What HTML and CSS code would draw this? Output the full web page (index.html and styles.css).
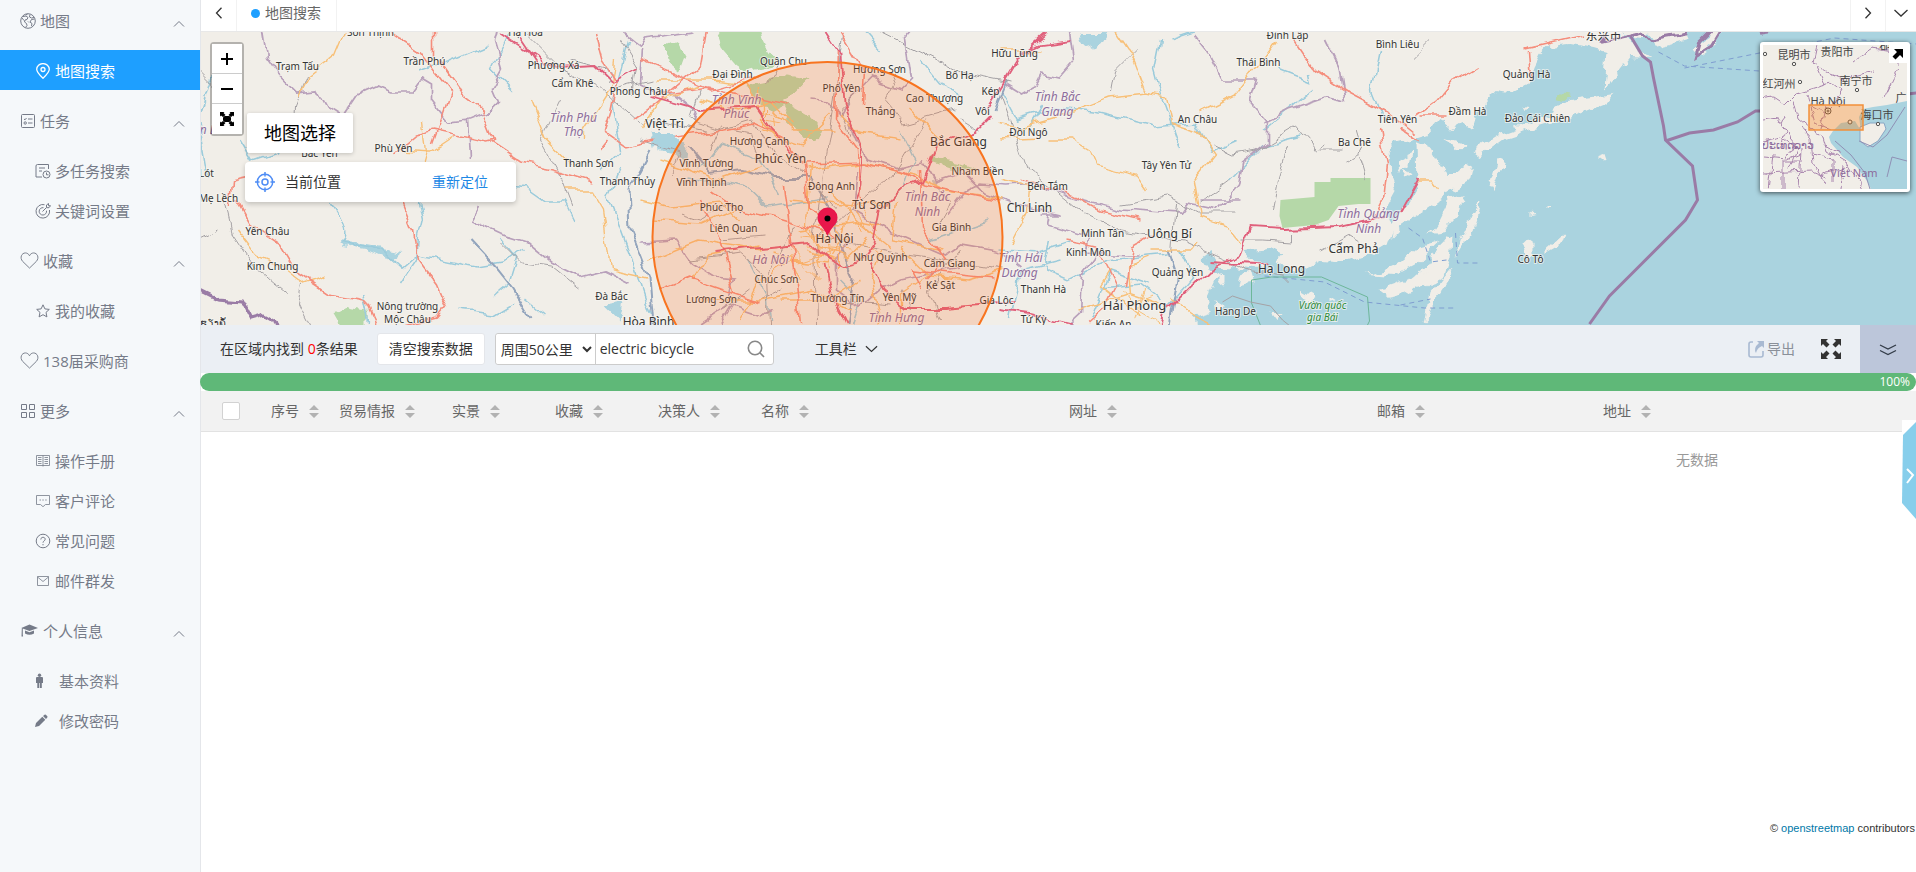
FILE: index.html
```html
<!DOCTYPE html>
<html lang="zh-CN">
<head>
<meta charset="utf-8">
<title>地图搜索</title>
<link rel="stylesheet" href="styles.css">
</head>
<body>
<svg class="defs" aria-hidden="true">
  <symbol id="up" viewBox="0 0 12 8"><path d="M1 6.5 6 1.5l5 5" fill="none" stroke="currentColor"/></symbol>
  <symbol id="heart" viewBox="0 0 20 18"><path d="M10 17 2.800 10C-.8 6 1.800 1 5.600 1 7.600 1 9.200 2.200 10 4 10.800 2.200 12.400 1 14.400 1c3.800 0 6.400 5 2.800 9z" fill="none" stroke="currentColor"/></symbol>
  <symbol id="sort" viewBox="0 0 10 13"><path d="M5 0 10 5H0zM5 13 0 8h10z" fill="#b2b2b2"/></symbol>
</svg>
<div class="app">
<nav class="side">
  <a class="group first" href="#"><svg class="ic" viewBox="0 0 16 16"><g fill="none" stroke="currentColor"><circle cx="8" cy="8" r="7.3"/><path d="M3 3.500 6 3l2 1.500-1 2-2 .5-.5 2 2 1.500.5 2-1.500 2M2 5l2 2.500M10 1.500 9.500 4l2 1 2.500-.5M14.500 6l-3 .5L10 9l2 1.500-.5 2.500M8 8.500l1 1M5.500 2l2-.8"/></g></svg><span>地图</span><svg class="fold"><use href="#up"/></svg></a>
  <a class="item on" href="#"><svg class="ic" viewBox="0 0 16 16"><g fill="none" stroke="currentColor" stroke-width="1.300"><path d="M8 15.300C4 11.500 1.700 9.300 1.700 6.300a6.300 5.700 0 0 1 12.600 0C14.300 9.300 12 11.500 8 15.300z"/><circle cx="8" cy="6.500" r="2"/></g></svg><span>地图搜索</span></a>
  <a class="group" href="#"><svg class="ic" viewBox="0 0 16 16"><g fill="none" stroke="currentColor"><rect x="1.500" y="1.500" width="13" height="13" rx="1"/><path d="M4 6l1 .8L6.500 5M8 6h4.500M8 10h4.500"/><circle cx="5.200" cy="10" r="1.200"/></g></svg><span>任务</span><svg class="fold"><use href="#up"/></svg></a>
  <a class="item" href="#"><svg class="ic" viewBox="0 0 16 16"><g fill="none" stroke="currentColor"><path d="M13.500 6V1.500H2.500Q1 1.500 1 3v11h6M4 5h6M4 8h3"/><circle cx="11.500" cy="11.500" r="3.500"/><path d="M11.500 9.500v2.300h2"/></g></svg><span>多任务搜索</span></a>
  <a class="item" href="#"><svg class="ic" viewBox="0 0 16 16"><g fill="none" stroke="currentColor"><path d="M9.500 1.700A6.800 6.800 0 1 0 14.500 7M8.500 4.700A3.700 3.700 0 1 0 11.500 7.700M7.500 8.500l4-4V2l2-1.500V2.700h2l-1.500 2h-2.500"/></g></svg><span>关键词设置</span></a>
  <a class="group" href="#"><svg class="ic big"><use href="#heart"/></svg><span>收藏</span><svg class="fold"><use href="#up"/></svg></a>
  <a class="item" href="#"><svg class="ic" viewBox="0 0 16 16"><path d="M8 1.800l1.900 4.100 4.400.5-3.300 3 .9 4.500L8 11.700l-3.900 2.200.9-4.500-3.300-3 4.400-.5z" fill="none" stroke="currentColor"/></svg><span>我的收藏</span></a>
  <a class="group leaf" href="#"><svg class="ic big"><use href="#heart"/></svg><span>138届采购商</span></a>
  <a class="group" href="#"><svg class="ic" viewBox="0 0 16 16"><path d="M1.500 1.500h5v5h-5zM9.500 1.500h5v5h-5zM1.500 9.500h5v5h-5zM9.500 9.500h5v5h-5z" fill="none" stroke="currentColor"/></svg><span>更多</span><svg class="fold"><use href="#up"/></svg></a>
  <a class="item" href="#"><svg class="ic" viewBox="0 0 16 16"><path d="M1.500 2.500h13v10h-13zM8 2.500v11M3 4.500h3.500M3 6.500h3.500M3 8.500h3.500M3 10.500h3.500M9.500 4.500H13M9.500 6.500H13M9.500 8.500H13M9.500 10.500H13" fill="none" stroke="currentColor" stroke-width=".8"/></svg><span>操作手册</span></a>
  <a class="item" href="#"><svg class="ic" viewBox="0 0 16 16"><path d="M1.500 2.500h13v9h-4L8 13.700l-2.500-2.200h-4zM4.500 7H6M7.300 7h1.500M10.200 7h1.500" fill="none" stroke="currentColor" stroke-width=".8"/></svg><span>客户评论</span></a>
  <a class="item" href="#"><svg class="ic" viewBox="0 0 16 16"><g fill="none" stroke="currentColor"><circle cx="8" cy="8" r="6.800"/><path d="M5.800 6.500C5.800 3.500 10.200 3.700 10.200 6.200 10.200 8 8 7.800 8 9.700M8 11v1.300"/></g></svg><span>常见问题</span></a>
  <a class="item" href="#"><svg class="ic" viewBox="0 0 16 16"><path d="M2.500 3.500h11v9h-11zM2.500 4 8 8.500 13.500 4" fill="none" stroke="currentColor" stroke-width=".8"/></svg><span>邮件群发</span></a>
  <a class="group" href="#"><svg class="ic wide" viewBox="0 0 18 16"><path d="M9 1.500 17.500 5 9 8 .8 5zM4.500 7.500 9 9.200l4.500-1.700v3q-4.500 2.500-9 0zM1.300 5.500h1v6l.3 2H1z" fill="currentColor"/></svg><span>个人信息</span><svg class="fold"><use href="#up"/></svg></a>
  <a class="item person" href="#"><svg class="ic" viewBox="0 0 16 16"><path d="M1 5q0-1 1-1h5q1 0 1 1v5H6.800v5H4.900v-5h-.7v5H2.300v-5H1z" fill="currentColor"/><circle cx="4.500" cy="2.200" r="1.700" fill="currentColor"/></svg><span>基本资料</span></a>
  <a class="item person" href="#"><svg class="ic" viewBox="0 0 16 16"><path d="M0 14 1 10 7.300 3.700l3 3L4 13zM8 3l1.500-1.300q.7-.5 1.300 0l1.500 1.500q.5.600 0 1.200L11 6z" fill="currentColor"/></svg><span>修改密码</span></a>
</nav>
<main class="main">
  <header class="tabs">
    <button class="arrow" aria-label="上一个"><svg viewBox="0 0 12 12"><path d="M8.500.8 3.500 6l5 5.200"/></svg></button>
    <a class="tab" href="#"><i></i>地图搜索</a>
    <button class="arrow next" aria-label="下一个"><svg viewBox="0 0 12 12"><path d="M3.500.8 8.500 6l-5 5.200"/></svg></button>
    <button class="arrow more" aria-label="更多标签"><svg viewBox="0 0 14 12"><path d="M.5 3 7 9l6.500-6"/></svg></button>
  </header>
  <section class="map" aria-label="地图">
    <svg class="canvas" viewBox="200 32 1716 293" preserveAspectRatio="xMidYMid slice">
      <defs>
        <filter id="rough" filterUnits="userSpaceOnUse" x="190" y="20" width="1740" height="320"><feTurbulence type="fractalNoise" baseFrequency=".07" numOctaves="3" seed="4"/><feDisplacementMap in="SourceGraphic" scale="12" xChannelSelector="R" yChannelSelector="G"/></filter>
        <filter id="winding" filterUnits="userSpaceOnUse" x="190" y="20" width="1740" height="320"><feTurbulence type="fractalNoise" baseFrequency=".05" numOctaves="2" seed="9"/><feDisplacementMap in="SourceGraphic" scale="12" xChannelSelector="R" yChannelSelector="G"/></filter>
      </defs>
      <path class="land" d="M200 32h1716v293H200z"/>
      <g filter="url(#rough)">
        <path class="water" d="M1620 20 1632 46 1652 57 1630 56 1614 76 1603 88 1606 52 1592 48 1570 44 1548 46 1540 54 1532 70 1528 84 1516 92 1498 89 1488 100 1476 116 1472 130 1462 122 1452 128 1440 119 1428 133 1412 138 1394 142 1386 152 1390 176 1396 192 1384 214 1392 226 1386 244 1366 256 1342 264 1320 262 1304 270 1282 266 1268 262 1248 270 1230 267 1216 278 1208 296 1210 312 1190 318 1220 345 1940 345 1940 20z"/>
        <path class="water" d="M1244 252l26-3 12 6-8 9-22-2zM1202 258l8-6 8 14 16 4-20 6zM1078 32l30 0-6 10-8 10-12-8zM652 134l22 0 14 14-2 20-10-14-20-4zM340 240l20 4 44 8-14 8-24-10-24-4zM604 306l20-4-4 20z"/>
        <g class="isle">
          <path d="M1606 20l72 0 8 20-30 8-6-10-16-2zM1712 20h16l-12 22-16 12-7-4 14-10zM1758 20h30l-12 12zM1417 143l14 6 14 24 10 0 18-8-4 16-20 12-26 18-22 14-11 12 2-16 14-16 12-20zM1404 155l8-4-2 12-14 10zM1444 138l20 6-8 8zM1472 150l26-16 40-14 32-20 44-6-12 10-34 14-34 10-30 10-24 18zM1496 158l8 2-8 20-4 12-4-6zM1450 198l12-4-4 22-14 16-14 2 8-12zM1478 202l3 0-8 26-18 30 6-20zM1444 240l8-6-2 24-6 18-18 8-24 2 20-16zM1450 270l4 4-18 26-8 18-4 4 6-28zM1520 243l6-6 8 6 0 12-8 8zM1546 250l18-16-4 12-14 8zM1598 155l8-3 2 6-10 1zM1522 104l6 1-4 3zM1529 212l4 4-4 1zM1564 188l4 4zM1545 206l5 0-5 3zM1620 173l3 1z"/>
          <path d="M1240 276l10-4 2 12-14 2zM1218 276l8 0 0 8-8 2zM1366 274l26-6 24-20 22-6-20 20-26 14zM1380 290l40-14 18-6-24 18-24 10zM1436 256l16-16-4 22-18 26-4-4zM1330 296l6 4-6 2zM1300 290l14 8-6 4zM1270 312l12 0-6 8zM1318 276l6 2zM1214 300l8 6-6 8zM1404 168l6 8-8 6z"/>
        </g>
        <path class="forest" d="M714 28h46l4 16 10 14-4 8-26 6-10-8-12-14zM664 46l14-6 8 16-6 16-10-8z"/>
        <path class="forest" d="M746 84l40-8 22 4-14 14-12 6 24 14 14 16-4 10-12 0-14-18-8-16-8 4-16-4-6-14z"/>
        <path class="forest" d="M334 314l12-6 20 4 0 16-24 0zM1558 94l10 2-6 6-8-2z"/>
        <path class="forest" d="M930 156l30 6 18 6-20 4-28-10z"/>
      </g>
      <path class="forest" d="M1280 200l34-3v-15h16v-4h40v26l-12 0-20 2-10 14-14 5-32 3-3-12z"/>
      <g class="lines" filter="url(#winding)">
        <g class="stream">
          <path d="M332 203q20 30 10 38l40 10 20 18 16-14 60 12 24-4 20-14"/><path d="M418 200l4 20-4 16-2 24-16 24M470 170l18 10 36 8 20 14 20 0 10 20M500 238l16 20-8 26-14 12M524 300l20 16M214 70l-16 50 10 60M240 140l12 20 24-8 8-20 20-10M458 310l36 4 20-12M362 292l6 30M484 46l-38 16-30 10"/>
          <path d="M510 32l-18 38 20 20M600 170l20-20-8-50 14-60M620 170l-12 26 22 60 20 60M1000 90l16 30 40-12 38 4 60 14 40-4 16 30 26-12M1044 105l-12 20M1160 40l-6 30 8 30 18 50M1230 180l32-34 40-10M1280 70l30 12-2-10M1380 50l-8 40 12 30M1265 128l50-40M880 50l-16-18M920 60l20 24 20 10M900 130l14 30-10 30M1200 30l-30 10M1050 240l-6 30 24 10 40-20 60-6M1000 250l40 2 30-10M1010 320l10-50 40-10M1090 320l20-50 40 14M1160 300l-20-16-40 4M1178 250l14 30-26 30M700 170l20-26 38 14 20 34M688 178l60 10 20 20 60-10M770 320l-2-20-20-40M840 280l20 20-8 25M930 240l60-20"/>
        </g>
        <path class="river" d="M690 148l22 26 30-4 30 8 38 0 26 40 4 30 14 30-8 48M470 240l26 28 16 20 18 30M650 150l-22 40 2 40 18 46 4 50M1168 250l10 30-8 45M1006 80l-12 30"/>
        <g class="border">
          <path d="M262 32l4 26 10 14 20 20 20-2 10 18 16 10 16-24 18-8 14 6 22 0 10-14 10 6 0 18 16 20 20-2 20-8 10-10-6-14 10-18-8-28 4-18M466 120l2 40M478 206l-8 14 30 14 26 8 24 20 28 14 24-6 28 14"/>
          <path d="M620 32l20 16 6-10 46-6M642 50l-2 34 16 8 20 4 20 16-4 16M810 100l20 2 10 14 8-14 24-24 28 10 10-10-6-40 14-16M848 120l8 20 12 18 30 10 24-6 12 20 30-10 20 20 38 14 40 10-20 0M856 170l-4 40 34 20 60 26 14-10 46 8 16 12M850 240l-14 20 0 30 24 18 20-18 20-10 60-12M720 325l12-20 30 10 10-8M640 242l36-2 16 22 22 14 20 2-8 30-30 20"/>
          <path d="M1005 84l16 10 14-8 6-12 18 4 14-16-4-30M1194 36l16 20 12 24 28 0 6 0-6 22 18 20 0 20-26 20-4 24-20 24-30-6-8 10-60-4-46-12-40-14-26 2-28-2-16 8-18 24M1264 122l24-12 36-12 20 4-6-36-14-28M1240 200l-40 0M1050 215l-2 10 40 12-2 14 40 4 12 0M1100 250l-18 24-2 40-16 15"/>
        </g>
        <path class="nation" d="M194 288l24 12 24 2 8 16 14-4 10 6 8 24 30 16-6 0M1603 32l-2 10 26-6 16-4 8 8 34-6-6-12M1722 26l-12 20-16 10 4-14 14-14M1756 20l4 14 28-4"/>
        <g class="rail">
          <path d="M198 70l20 20M198 238l20-10M224 202l8 32 20 30 36 30M306 76l-12 30-2 34M302 284l-4 20 14 28M1000 95l16 44 10 30 26 20 30 24 40 18 60 10 30 14 40 18 30 4 6 6M1176 205l-4 48M524 32l38 38 40 20 40 36M650 120l60 12 40-12 20 30 30 20 36 40M842 34l-8 70-20 130 2 90M816 240l80-70 30-50M824 238l60 12 118 20M880 32l80 40 50 10M768 325l-2-50 30-50"/>
          <path d="M580 290l-30-24-30-4-20-20M620 40l16 26-4 30M650 80l-40 10M570 60l40 10-4 12M1110 92l4-22 20-20M1212 145l20 10 24-4 40-24 20 24 10-6M1272 210l6-32 10-32M1120 205l46-8 30 16 40 0M1346 160l16-10-6-20M1366 180l-8-28M1340 150l-20 0M1240 240l22 0 30 2 0-16M1320 252l28-16 16 10M1410 60l20-20M1230 180l-30 22M560 100l-20 40 22 40 10 26"/>
          <path d="M640 140l40 14-10 20M700 90l-10 30 30 10M710 150l10-24 30 6 10 30M730 200l-30 20-20-6M720 240l44-4M690 260l50-6 26 22M780 60l-14 26M860 90l-20 20 10 24M900 70l-16 30 20 24 50-14M930 180l20 20-10 24M880 210l20-20M960 250l-30 40 10 30M840 300l50 4M900 290l10 20M750 290l-26 20M780 290l-20 10M980 130l-20-12"/>
        </g>
        <g class="minor">
          <path d="M344 32l-10 24-26 20-10 20M416 188l10-36-4-30M236 230l20 26 24 10 24 18 22-8M400 150l30 2 24-16M530 100l16 40 24 24M614 60l-4 30-26 40 0 10M566 190l24 0 12 20 8 60 36 8M640 130l20-30 40-14M654 80l60 0 30 4 10 14M640 200l30 8 50-6 20 20M650 220l50 4 40-18M648 260l50-20 60 10M660 160l60 20 40-14M700 100l40 10 30-10 22 24M760 90l0 30 18 20M770 110l24 20 40 0"/>
          <path d="M806 170l60-8 50 14 30 14 56 8M810 165l-4 60 10 20 30 12 20-20M790 200l60 6 40-2M800 230l60-8 20 4M830 190l20 26 40 32M836 260l-30-10M850 200l-10 40-10 16M880 250l-10 30 10 45M900 246l30 30 40 4 34-10M740 320l20-40 30-20 40 4M700 300l60 0 50-10 40 20M900 325l0-30 30-20M860 280l-30 20-50 0M896 200l-4 40 50 10M910 110l30 30M900 140l-40-6-20-20M760 130l40 14 30-30M692 280l16-24 50-10M800 280l-10-24-20-4"/>
          <path d="M1114 32l20 30 12 32 20 4 6 26 26 8 16 24-20 24 6 36 24 8 16 20M1148 94l-40 4-30 12-60 18-20-4M1050 140l20 0 20 12 6 14 40 10 10 14M1200 112l36-18 30-38 10-14M1002 180l26 6-2 26-16 32M1150 250l40 0 6-8M1130 295l-2-30 22-8M1140 315l-40-30 10-16M1418 180l12 0 8 10M1170 300l20 14 20 10M1000 50l40 0M1000 140l40-2M1078 310l50-16 30 10"/>
        </g>
        <g class="city">
          <path d="M800 236l50 4M806 246l44 4M812 230l8 40M824 230l6 40M838 228l0 40M846 208l16 24M852 206l16 26M858 202l18 30M790 250l30 30M798 262l40-12M862 244l30 20M758 112l24 6M760 120l20 4M764 108l0 20M772 108l2 20M1124 290l14 20 20 12M1130 304l20-8M1134 320l10-30"/>
        </g>
        <g class="road">
          <path d="M390 32l30 20 30 40-10 30-8 22M434 32l0 24M438 60l26 36 18 14 12 30-8 2-54-12-16 4-24 20M490 142l30 20 30 6 40 12M560 170l-2 2M230 208l2-28 18-4 24 4M236 200l14 24 30 20 18 30 30 20 36 6 14 30 30-4M402 200l12 30 4 30 18 24 10 24-8 10-40 10M594 32l8 30 14 20-6 30-6 20 20 14 30-6M632 120l20-14 48-40 6-34M600 150l8-10"/>
          <path d="M640 60l70 30 50-14M652 96l56-8 80 16M674 136l50-6 30-6 30 14 20 28 4 42 20 12 6 26M804 164l60-2 40 10 20 12 76 16M712 190l30 20 30 6 54 16M784 184l12 100 4 40M700 200l20 40 14 52M660 290l30-12 40 14 30 10M838 50l-2 70 22 30 2 50M840 32l24 40-2 30M1066 240l30 6 10 20 10 20-10 20-20 18M922 290l-10-20 80 8M920 170l2 60 24 30-20 20M1020 180l50 14 30 16 40 10M1150 235l-18 10-6 40M1400 130l18 12M1294 40l20 30 34 22 38 20 30 24M1380 130l6 34-4 36-10 20M1416 115l20-14 20-24 20-12M1584 34l-60 14M1528 50l2 30M1420 116l28 0"/>
        </g>
        <g class="trunk">
          <path d="M500 32l36 24 20 12 40-2 16 16 24-14M520 38l20 30M650 96l50 14 54-4 14 20 24 26M826 32l14 22 4 50 18 46-2 36-8 20M714 253l34-4 60-6 20 16 14 6 16-4 14-20 6-30 20-20 24-10 14-36 40-14 14-14M825 265l6 30 14 30M870 262l14 30 20 16 40 0 70-6M1000 310l30 4 40 10M986 110l30-50 30-26M1168 310l40-40 30-14 12-30 30 2 60-2 44-10M1164 312l-4 14M1070 40l-30 4-20 10M1210 262l60 4M1400 210l18-32"/>
        </g>
      </g>
      <path class="nation" d="M1630 36l12 20 8 6 3 16 10 48 2 14 27 26 5 34-12 20-50 50-26 26-20 28M1665 141l24-8 24-3 24-8 18-11h12l149-18"/>
      <path class="ferry" d="M1658 52l26 14 30 2 60 4M1684 68l150-30 82 6M1408 228l14 10 8 24 16-2M1264 276l60 6 40 20 60 6 30 0M1455 233l2 30 22 0M1400 305l30-6"/>
      <path class="park" d="M1251 280l20-3 50 0 46 20 2 24-6 12-100 0-12-30z"/>
      <path class="rail" d="M1222 302l10-6 18 6 20 4 12 14 10 8"/>
      <g class="names">
        <text x="297" y="70">Trạm Tấu</text><text x="424" y="65">Trần Phú</text><text x="370" y="36">Sơn Thịnh</text><text x="525" y="36">Hạ Hoà</text><text x="553" y="69">Phượng Xá</text><text x="572" y="87">Cẩm Khê</text><text x="638" y="95">Phong Châu</text><text x="319" y="157">Bắc Yên</text><text x="393" y="152">Phù Yên</text><text x="206" y="177">Lót</text><text x="218" y="202">Mẹ Lềch</text><text x="267" y="235">Yên Châu</text><text x="272" y="270">Kim Chung</text><text x="407" y="310">Nông trường</text><text x="407" y="323">Mộc Châu</text><text x="588" y="167">Thanh Sơn</text><text x="627" y="185">Thanh Thủy</text><text x="611" y="300">Đà Bắc</text><text x="648" y="326" class="m">Hòa Bình</text><text x="212" y="326">ຊຽງຄໍ້</text>
        <text x="783" y="65">Quân Chu</text><text x="732" y="78">Đại Đình</text><text x="879" y="73">Hương Sơn</text><text x="841" y="92">Phổ Yên</text><text x="934" y="102">Cao Thượng</text><text x="880" y="115">Thắng</text><text x="759" y="145">Hương Canh</text><text x="706" y="167">Vĩnh Tường</text><text x="701" y="186">Vĩnh Thịnh</text><text x="831" y="190">Đông Anh</text><text x="721" y="211">Phúc Thọ</text><text x="733" y="232">Liên Quan</text><text x="951" y="231">Gia Bình</text><text x="880" y="261">Như Quỳnh</text><text x="949" y="267">Cẩm Giang</text><text x="776" y="283">Chúc Sơn</text><text x="711" y="303">Lương Sơn</text><text x="837" y="302">Thường Tín</text><text x="899" y="301">Yên Mỹ</text><text x="940" y="289">Kẻ Sặt</text><text x="996" y="304">Gia Lộc</text><text x="977" y="175">Nham Biền</text><text x="959" y="79">Bố Hạ</text><text x="990" y="95">Kép</text><text x="982" y="115">Vôi</text><text x="1014" y="57">Hữu Lũng</text><text x="1028" y="136">Đồi Ngô</text><text x="1047" y="190">Bến Tắm</text><text x="1197" y="123">An Châu</text><text x="1166" y="169">Tây Yên Tử</text><text x="1258" y="66">Thái Bình</text><text x="1287" y="39">Đình Lập</text><text x="1397" y="48">Bình Liêu</text><text x="1397" y="123">Tiên Yên</text><text x="1354" y="146">Ba Chẽ</text><text x="1102" y="237">Minh Tân</text><text x="1088" y="256">Kinh Môn</text><text x="1177" y="276">Quảng Yên</text><text x="1043" y="293">Thanh Hà</text><text x="1033" y="323">Tứ Kỳ</text><text x="1113" y="328">Kiến An</text><text x="1235" y="315">Hang De</text><text x="1526" y="78">Quảng Hà</text><text x="1467" y="115">Đầm Hà</text><text x="1537" y="122">Đảo Cái Chiên</text><text x="1530" y="263">Cô Tô</text><text x="1603" y="40" class="m">东兴市</text>
        <g class="m"><text x="664" y="128">Việt Trì</text><text x="780" y="163">Phúc Yên</text><text x="958" y="146">Bắc Giang</text><text x="871" y="209">Từ Sơn</text><text x="834" y="243">Hà Nội</text><text x="1029" y="212">Chí Linh</text><text x="1169" y="238">Uông Bí</text><text x="1281" y="273">Hạ Long</text><text x="1353" y="253">Cẩm Phả</text><text x="1134" y="310" class="l">Hải Phòng</text></g>
        <g class="prov"><text x="573" y="122">Tỉnh Phú</text><text x="573" y="136">Thọ</text><text x="736" y="104">Tỉnh Vĩnh</text><text x="736" y="118">Phúc</text><text x="927" y="201">Tỉnh Bắc</text><text x="927" y="216">Ninh</text><text x="770" y="264">Hà Nội</text><text x="896" y="322">Tỉnh Hưng</text><text x="1057" y="101">Tỉnh Bắc</text><text x="1057" y="116">Giang</text><text x="1020" y="262">Tỉnh Hải</text><text x="1019" y="277">Dương</text><text x="1368" y="218">Tỉnh Quảng</text><text x="1368" y="233">Ninh</text><text x="204" y="134">Sơn La</text></g>
        <g class="reserve"><text x="1322" y="309">Vườn quốc</text><text x="1322" y="321">gia Bái</text></g>
      </g>
      <circle class="range" cx="827" cy="237" r="175"/>
      <path class="pin" d="M827 236C823 226 817 225 817 217.500a10 10 0 0 1 20 0C837 225 831 226 827 236z"/><circle cx="827" cy="218.500" r="3"/>
    </svg>
    <div class="zoom"><button aria-label="放大"><svg viewBox="0 0 14 14"><path d="M7 1v12M1 7h12" stroke="#000" stroke-width="2"/></svg></button><button aria-label="缩小"><svg viewBox="0 0 14 14"><path d="M1 7h12" stroke="#000" stroke-width="2"/></svg></button><button aria-label="全屏"><svg viewBox="0 0 14 14"><rect x="3" y="4" width="8" height="6" rx="2"/><path d="M0 0h4.500L3.500 1 5.500 3 3 5 1 3.500 0 4.500zM14 0v4.500l-1-1L11 5 8.500 3l2-2-1-1zM0 14V9.500l1 1L3 9l2.500 2-2 2 1 1zM14 14H9.500l1-1-2-2L11 9l2 1.500 1-1z"/></svg></button></div>
    <h1 class="pick">地图选择</h1>
    <div class="locate"><svg viewBox="0 0 20 20"><g fill="none" stroke="#4f8df5" stroke-width="1.500"><circle cx="10" cy="10" r="7.700"/><circle cx="10" cy="10" r="3"/><path d="M10 0v4.500M10 15.500V20M0 10h4.500M15.500 10H20"/></g></svg><span>当前位置</span><a href="#">重新定位</a></div>
    <div class="mini">
      <svg viewBox="0 0 144 144">
        <defs><filter id="mr" x="0" y="0" width="1" height="1"><feTurbulence type="fractalNoise" baseFrequency=".1" numOctaves="2" seed="3"/><feDisplacementMap in="SourceGraphic" scale="8" xChannelSelector="R" yChannelSelector="G"/></filter></defs>
        <path d="M0 0h144v144H0z" fill="#f1eee8"/>
        <path d="M144 56l-20 4-14 2-10 2-4 8 2 14-6-10-14 2-8 8-4 6 2 6 12 14 14 10 10 14 4 8h36z" fill="#aad3df"/>
        <path d="M97 82l10-4 14 0 2 6-8 12-10 6-8-6z" fill="#f1eee8" stroke="#8aa7c4"/>
        <g filter="url(#mr)" fill="none" stroke="#bfa3c4" stroke-width="1"><path stroke="#a884ad" d="M-4 54l14-2 12 8 12-12 20-6 14-4 10 8-8 14M30 56l4 16 14 12 12 8 4 14 20 12 16 26 4 16M54 0l-4 18 14 10 16 6 30-8M54 22l8 18M135 0l0 24-14 30M90 18l20-14 26 4M0 76l14-2 8 12-4 18M22 70l-4 10 14 18-10 16M44 50l8 28 14 6M48 60l14 8 8-8M38 82l10 12 2 24 12 22M0 96l18-4 16 12-8 20M0 112l24 2 14-6M6 144l4-34M20 144l0-28 20 0M36 144l2-40M0 128l48-2 14 6M50 108l20 6 0 24M56 130l30-8M78 144l2-24M60 100l18 10M64 60l-6 24"/></g>
        <path d="M142 62 124 90 110 102 96 96M72 96l16 14 14 18 5 16M124 132l5-20 15 4" fill="none" stroke="#8f90b5"/>
        <g fill="#f4f1ec" stroke="#555"><circle cx="2" cy="9" r="1.700"/><circle cx="31" cy="19" r="1.700"/><circle cx="37" cy="37" r="1.700"/><circle cx="94" cy="45" r="1.700"/><circle cx="65" cy="66" r="3"/><circle cx="65" cy="66" r="1"/><circle cx="115" cy="79" r="1.700"/><circle cx="87" cy="77" r="2"/></g>
        <g class="mtext"><text x="31" y="14">昆明市</text><text x="74" y="11">贵阳市</text><text x="16" y="43">红河州</text><text x="93" y="40">南宁市</text><text x="65" y="60">Hà Nội</text><text x="114" y="74">海口市</text><text x="138" y="57">广</text><text x="122" y="4">郡</text><text class="land-name" x="25" y="104">ປະເທດລາວ</text><text class="land-name" x="91" y="132">Việt Nam</text></g>
        <path d="M46 60h54v25H46z" fill="#ff7800" fill-opacity=".3" stroke="#f2903a" stroke-width="1.500"/>
      </svg>
      <button aria-label="收起小地图"><svg viewBox="0 0 12 12"><path d="M2 1h9v9L8 7l-4.500 4.500-3-3L5 4z"/></svg></button>
    </div>
  </section>
  <section class="tools">
    <p>在区域内找到 <b>0</b>条结果</p>
    <button class="clear">清空搜索数据</button>
    <form class="search"><select aria-label="范围"><option>周围50公里</option></select><input type="text" value="electric bicycle" aria-label="关键词"><button type="button" aria-label="搜索"><svg viewBox="0 0 18 18"><g fill="none" stroke="#888" stroke-width="1.600"><circle cx="8" cy="8" r="6.700"/><path d="M12.800 12.800 17 17"/></g></svg></button></form>
    <button class="bar">工具栏<svg viewBox="0 0 14 8"><path d="M1 1l6 5.500L13 1" fill="none" stroke="currentColor" stroke-width="1.300"/></svg></button>
    <button class="export"><svg viewBox="0 0 18 18"><path d="M6 2H4Q2 2 2 4v11q0 2 2 2h10q2 0 2-2v-4" fill="none" stroke="#a9bad2" stroke-width="1.600"/><path d="M10 1h7v7l-2-2Q10 8 9 13 6 8 12 3z" fill="#a9bad2"/></svg>导出</button>
    <button class="full" aria-label="全屏"><svg viewBox="0 0 20 20"><path d="M0 0h7L5 2l3.500 3.500-3 3L2 5 0 7zM20 0v7l-2-2-3.500 3.500-3-3L15 2l-2-2zM0 20v-7l2 2 3.500-3.500 3 3L5 18l2 2zM20 20h-7l2-2-3.500-3.500 3-3L18 15l2-2z" fill="#333"/></svg></button>
    <button class="collapse" aria-label="收起"><svg viewBox="0 0 18 12"><path d="M1 1l8 4 8-4M1 6.500l8 4 8-4" fill="none" stroke="#333c48" stroke-width="1.300"/></svg></button>
  </section>
  <div class="progress"><span>100%</span></div>
  <section class="data">
    <table>
      <colgroup><col class="c-check"><col class="c-no"><col class="c-trade"><col class="c-view"><col class="c-fav"><col class="c-fav"><col class="c-name"><col class="c-site"><col class="c-mail"><col></colgroup>
      <thead><tr><th><input type="checkbox" aria-label="全选"></th><th>序号<svg><use href="#sort"/></svg></th><th>贸易情报<svg><use href="#sort"/></svg></th><th>实景<svg><use href="#sort"/></svg></th><th>收藏<svg><use href="#sort"/></svg></th><th>决策人<svg><use href="#sort"/></svg></th><th>名称<svg><use href="#sort"/></svg></th><th>网址<svg><use href="#sort"/></svg></th><th>邮箱<svg><use href="#sort"/></svg></th><th>地址<svg><use href="#sort"/></svg></th></tr></thead>
    </table>
    <p class="empty">无数据</p>
    <button class="drawer" aria-label="展开面板"><svg viewBox="0 0 14 100" preserveAspectRatio="none"><path d="M0 0h14v16H0z" fill="#fff"/><path d="M14 2 1 15 0 83l14 16z" fill="#87ceeb"/><path d="M5 49l6 6-6 8" fill="none" stroke="#fff" stroke-width="2"/></svg></button>
  </section>
  <footer>© <a href="#">openstreetmap</a> contributors</footer>
</main>
</div>
</body>
</html>
```
FILE: styles.css
```css
* { box-sizing: border-box; }
body { margin: 0; font: 14px/20px "Open Sans", "Noto Sans CJK SC", sans-serif; color: #333; background: #fff; }
button, input, select { font: inherit; color: inherit; }
button { padding: 0; border: 0; background: none; }
a { color: inherit; text-decoration: none; }
p, h1 { margin: 0; font-weight: 400; }
.defs { position: absolute; width: 0; height: 0; }
.app { display: flex; min-height: 100vh; }

.side { flex: 0 0 200px; background: #f5f8fa; color: #757b88; font-size: 15px; }
.side a { display: flex; align-items: center; }
.group { height: 50px; margin: 5px 0; padding: 1px 15px 0 20px; gap: 4px; }
.group.first { height: 45px; margin-top: 0; padding-bottom: 4px; }
.group.leaf { margin-bottom: -5px; }
.item { height: 40px; padding: 1px 0 0 35px; gap: 4px; }
.item.on { background: #1e9fff; color: #fff; }
.item.person { gap: 8px; }
.ic { width: 16px; height: 16px; flex: none; }
.ic.big { width: 19px; height: 17px; }
.ic.wide { width: 19px; }
.fold { width: 12px; height: 8px; margin: 6px 0 0 auto; }

.main { flex: 1; min-width: 0; display: flex; flex-direction: column; border-left: 1px solid #e4e6ea; }
.tabs { display: flex; height: 32px; border-bottom: 1px solid #e8e8e8; color: #666; }
.arrow { width: 36px; padding-bottom: 5px; border-right: 1px solid #f2f2f2; color: #333; display: flex; align-items: center; justify-content: center; }
.arrow svg { width: 12px; height: 12px; fill: none; stroke: currentColor; stroke-width: 1.300; }
.arrow.next { margin-left: auto; border-left: 1px solid #f2f2f2; }
.arrow.more { width: 30px; border-right: 0; }
.arrow.more svg { width: 14px; }
.tab { display: flex; align-items: center; gap: 5px; padding: 0 15px 5px 14px; border-right: 1px solid #f2f2f2; }
.tab i { width: 9px; height: 9px; border-radius: 50%; background: #1e9fff; }

.map { position: relative; height: 293px; overflow: hidden; background: #f1eee8; }
.canvas { display: block; width: 100%; height: 100%; }
.land { fill: #f1eee8; }
.water { fill: #aad3df; }
.isle { fill: #f1eee8; }
.forest { fill: #b5d8a8; }
.lines, .nation, .ferry, .park, .rail { fill: none; }
.stream { stroke: #9bcbdb; stroke-width: 1.500; }
.river { stroke: #93a5bd; stroke-width: 2; }
.border { stroke: #b8a0bb; stroke-width: 1.700; }
.nation { stroke: #9a7ba6; stroke-width: 3; }
.rail { stroke: #a5a2a5; stroke-width: 1; }
.minor { stroke: #f8c078; stroke-width: 1.400; }
.city { stroke: #f8c078; stroke-width: 1; }
.road { stroke: #f58d7c; stroke-width: 1.600; }
.trunk { stroke: #e0607c; stroke-width: 1.800; }
.ferry { stroke: #7f9dd0; stroke-width: 1; stroke-dasharray: 5 4; }
.park { stroke: #6db79a; stroke-width: 1; }
.range { fill: #ff6a1f; fill-opacity: .2; stroke: #f8741f; stroke-width: 2; }
.pin { fill: #e8174b; }
.names { font: 10px "Noto Sans", "Noto Sans CJK SC", sans-serif; text-anchor: middle; fill: #333; stroke: #f8f6f2; stroke-opacity: .7; stroke-width: 2px; paint-order: stroke; }
.names .m { font-size: 12px; }
.names .l { font-size: 13px; }
.names .prov { font-size: 12px; font-style: italic; fill: #8d6d9c; }
.names .reserve { font-size: 10px; font-style: italic; fill: #2d8a3a; }

.zoom { position: absolute; left: 9px; top: 10px; display: flex; flex-direction: column; border: 2px solid rgba(0, 0, 0, .25); border-radius: 4px; background-clip: padding-box; }
.zoom button { width: 30px; height: 30px; background: #fff; border-bottom: 1px solid #ccc; display: grid; place-items: center; }
.zoom button:last-child { border: 0; }
.zoom svg { width: 14px; height: 14px; }
.pick { position: absolute; left: 46px; top: 81px; padding: 0 17px; font-size: 18px; line-height: 40px; color: #000; background: #fff; border-radius: 2px; box-shadow: 0 1px 4px rgba(0, 0, 0, .2); }
.locate { position: absolute; left: 44px; top: 130px; width: 271px; height: 40px; padding: 0 28px 0 10px; display: flex; align-items: center; background: #fff; border-radius: 4px; box-shadow: 0 2px 5px rgba(0, 0, 0, .2); }
.locate svg { width: 20px; height: 20px; margin-right: 10px; }
.locate a { margin-left: auto; color: #1e88e5; }
.mini { position: absolute; right: 6px; top: 10px; width: 150px; height: 150px; padding: 3px; background: #fff; border-radius: 3px; box-shadow: 0 1px 5px rgba(0, 0, 0, .65); }
.mini > svg { display: block; width: 144px; height: 144px; }
.mini button { position: absolute; top: 3px; right: 3px; width: 18px; height: 18px; background: #fff; display: grid; place-items: center; }
.mini button svg { width: 12px; height: 12px; }
.mtext { font: 11px "Noto Sans", "Noto Sans CJK SC", sans-serif; text-anchor: middle; fill: #444; }
.land-name { fill: #8c6a9b; }

.tools { display: flex; align-items: center; height: 48px; padding-left: 19px; background: #ebeff4; }
.tools b { color: #f00; font-weight: 400; }
.clear { height: 32px; margin-left: 19px; padding: 0 11px; background: #fff; border: 1px solid #e4e6ea; border-radius: 3px; }
.search { display: flex; width: 279px; height: 32px; margin-left: 10px; background: #fff; border: 1px solid #ccc; border-radius: 3px; }
.search select { width: 100px; padding: 0 0 0 1px; border: 0; border-right: 1px solid #ccc; background: #fff; border-radius: 3px 0 0 3px; }
.search input { flex: 1; min-width: 0; padding: 0 4px; border: 0; background: none; }
.search button { width: 34px; display: grid; place-items: center; }
.search svg { width: 18px; height: 18px; }
.bar { display: flex; align-items: center; gap: 8px; margin-left: 41px; }
.bar svg { width: 13px; height: 8px; }
.export { display: flex; align-items: center; margin-left: auto; color: #8a9099; }
.export svg { width: 18px; height: 18px; margin-right: 2px; }
.full { width: 20px; height: 20px; margin: 0 19px 0 26px; }
.full svg { display: block; }
.collapse { width: 56px; height: 48px; background: #bcc6da; }
.collapse svg { width: 18px; height: 12px; vertical-align: middle; }

.progress { height: 18px; margin-left: -1px; padding-right: 6px; border-radius: 9px; background: #5fb878; color: #fff; font-size: 12px; line-height: 18px; text-align: right; }

.data { position: relative; flex: 1; }
table { width: 100%; border-collapse: collapse; table-layout: fixed; color: #666; background: #f2f2f2; }
th { height: 40px; padding: 0 15px; border-bottom: 1px solid #e2e2e2; font-weight: 400; text-align: left; white-space: nowrap; }
th svg { width: 10px; height: 13px; margin-left: 10px; vertical-align: -2px; }
th:first-child { padding-left: 21px; }
th input { display: block; appearance: none; width: 18px; height: 18px; margin: 0; border: 1px solid #d2d2d2; border-radius: 2px; background: #fff; }
.c-check { width: 55px; }
.c-no { width: 68px; }
.c-trade { width: 113px; }
.c-view, .c-fav { width: 103px; }
.c-name { width: 308px; }
.c-site { width: 308px; }
.c-mail { width: 226px; }
.empty { width: 175%; max-width: 100%; padding: 18px 0 0 86%; color: #999; }
.drawer { position: absolute; right: 0; top: 29px; width: 14px; height: 100px; }
.drawer svg { display: block; width: 100%; height: 100%; }
footer { padding: 0 1px 36px; font: 11px/16px "Liberation Sans", Arial, sans-serif; text-align: right; }
footer a { color: #0078a8; }
```
